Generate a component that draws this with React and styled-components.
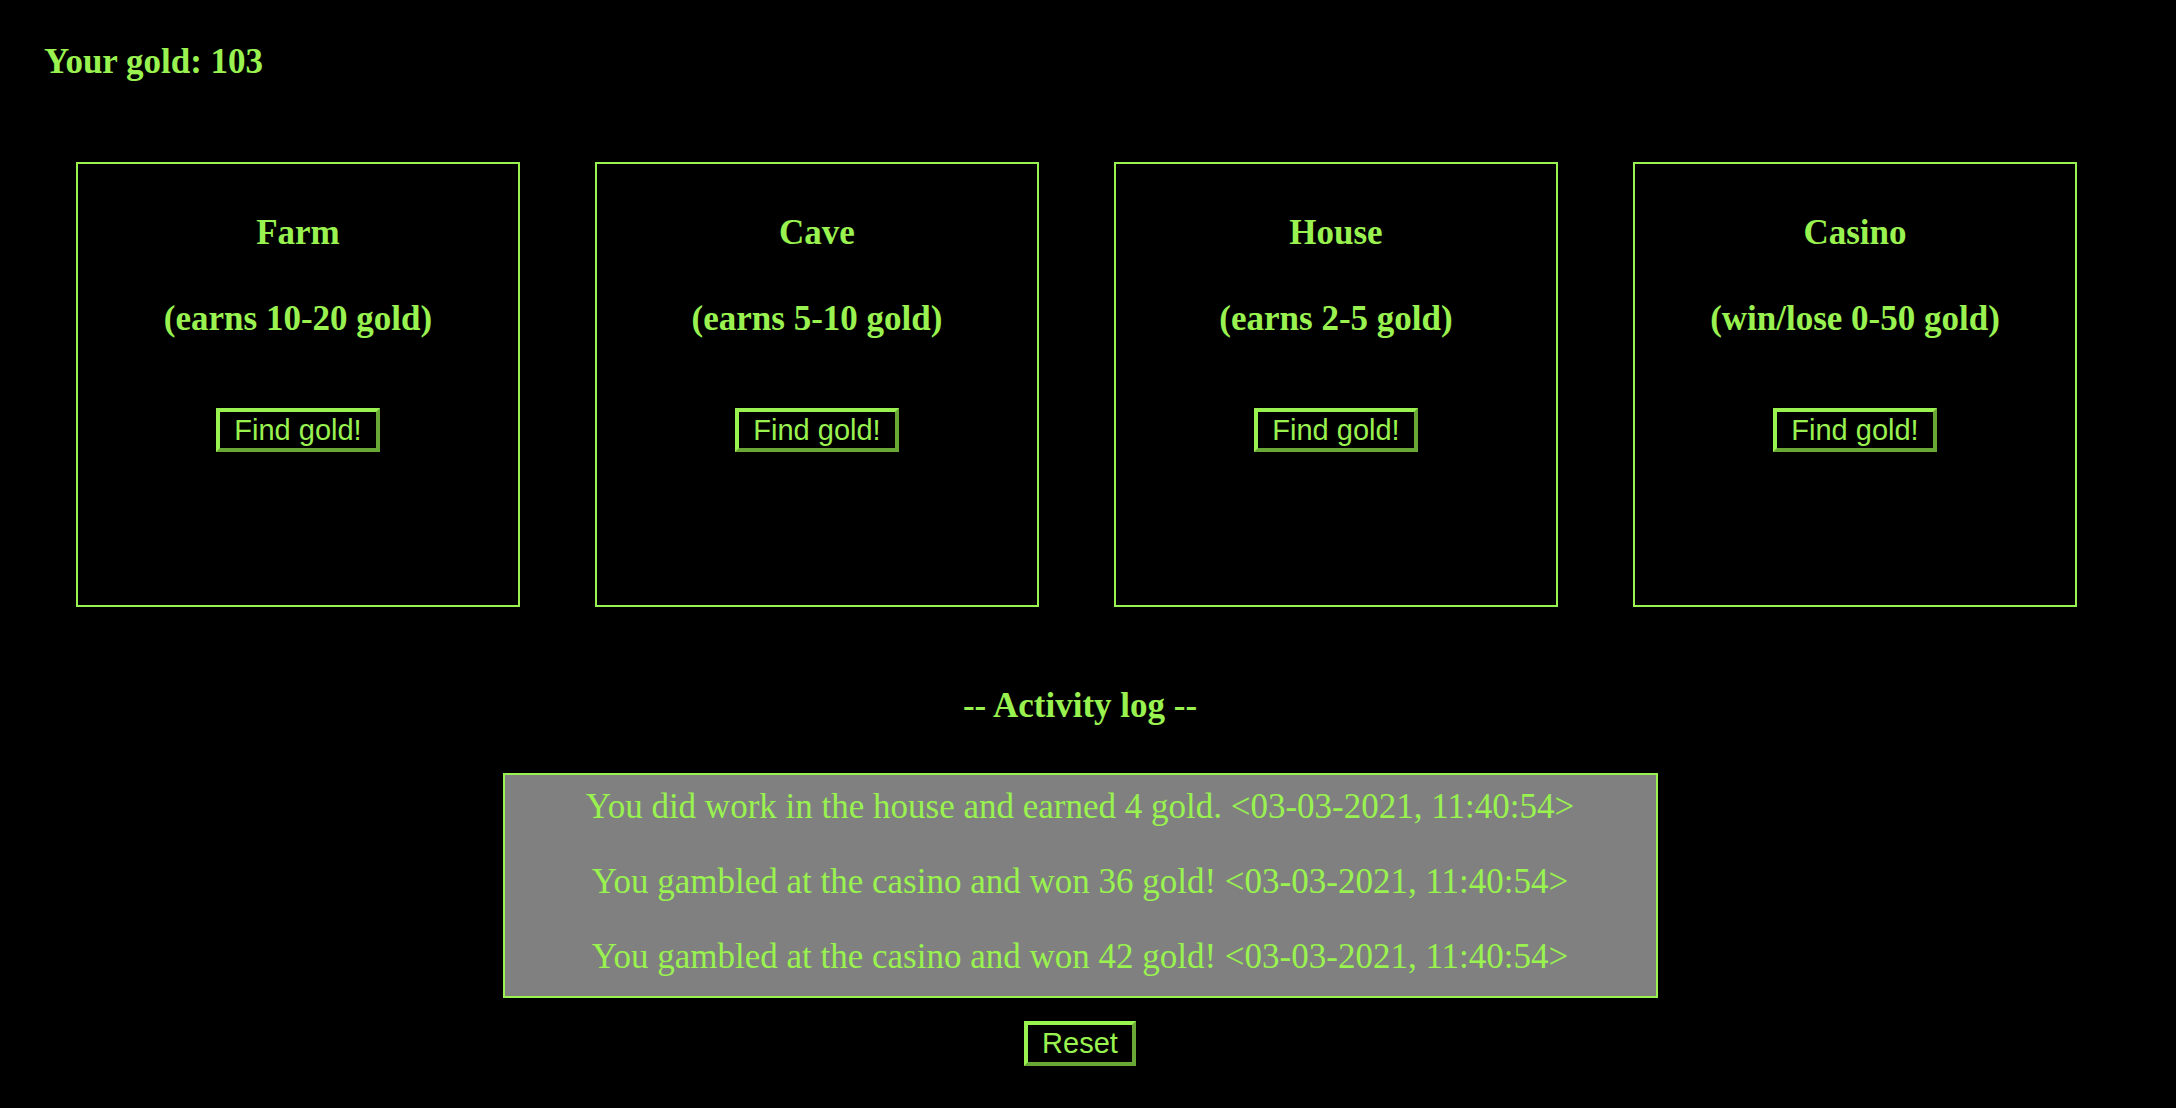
import React from 'react';
import styled, { createGlobalStyle } from 'styled-components';

const GlobalStyle = createGlobalStyle`
  html, body {
    margin: 0;
    padding: 0;
    background: #000;
  }
  body {
    font-family: "Liberation Serif", "Times New Roman", serif;
    color: #99f24f;
  }
`;

const Page = styled.div`
  padding: 0 32px 40px 16px;
  min-height: 1108px;
  box-sizing: border-box;
`;

const Gold = styled.h3`
  font-size: 35px;
  font-weight: bold;
  margin: 0;
  padding: 40px 0 0 28px;
  line-height: 44px;
`;

const Locations = styled.div`
  display: flex;
  gap: 75px;
  padding-left: 60px;
  margin-top: 78px;
`;

const Card = styled.div`
  width: 440px;
  height: 441px;
  border: 2px solid #99f24f;
  display: flex;
  flex-direction: column;
  align-items: center;
  text-align: center;
`;

const Title = styled.h3`
  font-size: 35px;
  font-weight: bold;
  margin: 0;
  line-height: 44px;
  margin-top: ${(props) => props.top}px;
`;

const GreenButton = styled.button`
  font-family: "Liberation Sans", Arial, sans-serif;
  font-size: 29px;
  color: #99f24f;
  background: #000;
  border: 4px solid;
  border-color: #99f24f #6aa836 #6aa836 #99f24f;
  padding: 2px 14px;
  height: ${(props) => props.h}px;
  line-height: 1;
  cursor: pointer;
  margin-top: ${(props) => props.top || 0}px;
`;

const LogHeading = styled.h3`
  font-size: 35px;
  font-weight: bold;
  margin: 77px 0 0;
  line-height: 44px;
  text-align: center;
`;

const LogBox = styled.div`
  width: 1151px;
  margin: 45px auto 0;
  background: #808080;
  border: 2px solid #99f24f;
  padding: 11px 0 18px;
  display: flex;
  flex-direction: column;
  gap: 33px;
  text-align: center;
`;

const LogLine = styled.p`
  margin: 0;
  font-size: 35px;
  line-height: 42px;
`;

const Footer = styled.div`
  display: flex;
  justify-content: center;
  margin-top: 23px;
`;

const locations = [
  { name: 'Farm', range: '(earns 10-20 gold)' },
  { name: 'Cave', range: '(earns 5-10 gold)' },
  { name: 'House', range: '(earns 2-5 gold)' },
  { name: 'Casino', range: '(win/lose 0-50 gold)' },
];

const log = [
  'You did work in the house and earned 4 gold. <03-03-2021, 11:40:54>',
  'You gambled at the casino and won 36 gold! <03-03-2021, 11:40:54>',
  'You gambled at the casino and won 42 gold! <03-03-2021, 11:40:54>',
];

export default function App() {
  return (
    <Page>
      <GlobalStyle />
      <Gold>Your gold: 103</Gold>

      <Locations>
        {locations.map((loc) => (
          <Card key={loc.name}>
            <Title top={47}>{loc.name}</Title>
            <Title top={42}>{loc.range}</Title>
            <GreenButton top={67} h={44}>Find gold!</GreenButton>
          </Card>
        ))}
      </Locations>

      <LogHeading>-- Activity log --</LogHeading>
      <LogBox>
        {log.map((entry, i) => (
          <LogLine key={i}>{entry}</LogLine>
        ))}
      </LogBox>

      <Footer>
        <GreenButton h={45}>Reset</GreenButton>
      </Footer>
    </Page>
  );
}
